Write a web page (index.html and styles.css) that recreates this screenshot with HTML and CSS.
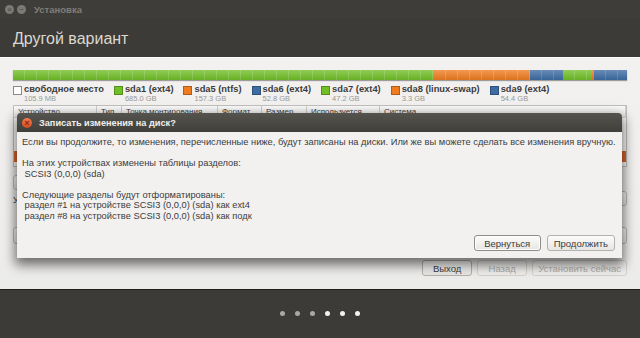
FILE: index.html
```html
<!DOCTYPE html>
<html lang="ru">
<head>
    <meta charset="UTF-8">
    <title>Установка</title>
    <link rel="stylesheet" href="styles.css">
</head>
<body>
    <div class="window">
        <div class="titlebar">
            <span class="wbtn wclose">&times;</span>
            <span class="wbtn wmin">&minus;</span>
            <span class="wtitle">Установка</span>
        </div>
        <div class="header">
            <h1>Другой вариант</h1>
        </div>

        <div class="content">
            <!-- Полоса разделов -->
            <div class="bar">
                <div class="seg green" style="flex: 685"></div>
                <div class="seg orange" style="flex: 157.3"></div>
                <div class="seg blue" style="flex: 52.8"></div>
                <div class="seg green" style="flex: 47.2"></div>
                <div class="seg orange" style="flex: 3.3"></div>
                <div class="seg blue" style="flex: 54.4"></div>
            </div>

            <div class="legend">
                <div class="item"><span class="sq free"></span><div><div class="name">свободное место</div><div class="size">105.9 MB</div></div></div>
                <div class="item"><span class="sq green"></span><div><div class="name">sda1 (ext4)</div><div class="size">685.0 GB</div></div></div>
                <div class="item"><span class="sq orange"></span><div><div class="name">sda5 (ntfs)</div><div class="size">157.3 GB</div></div></div>
                <div class="item"><span class="sq blue"></span><div><div class="name">sda6 (ext4)</div><div class="size">52.8 GB</div></div></div>
                <div class="item"><span class="sq green"></span><div><div class="name">sda7 (ext4)</div><div class="size">47.2 GB</div></div></div>
                <div class="item"><span class="sq orange"></span><div><div class="name">sda8 (linux-swap)</div><div class="size">3.3 GB</div></div></div>
                <div class="item"><span class="sq blue"></span><div><div class="name">sda9 (ext4)</div><div class="size">54.4 GB</div></div></div>
            </div>

            <!-- Таблица разделов (почти вся под диалогом) -->
            <div class="table">
                <div class="thead">
                    <span>Устройство</span><span>Тип</span><span>Точка монтирования</span><span>Формат</span><span>Размер</span><span>Используется</span><span>Система</span>
                </div>
                <div class="trow"></div>
                <div class="trow"></div>
                <div class="trow"></div>
                <div class="trow selected"></div>
                <div class="trow"></div>
            </div>

            <div class="tools">
                <span class="tbtn wide"></span><span class="tbtn"></span>
            </div>
            <div class="bootrow">
                <span class="bootlabel">У</span>
                <span class="tbtn wide"></span>
            </div>
            <div class="combo"></div>

            <div class="actions">
                <button class="btn">Выход</button>
                <button class="btn" disabled>Назад</button>
                <button class="btn" disabled>Установить сейчас</button>
            </div>
        </div>

        <div class="footer">
            <span class="dot done"></span><span class="dot done"></span><span class="dot done"></span><span class="dot"></span><span class="dot"></span><span class="dot"></span>
        </div>

        <!-- Диалог подтверждения -->
        <div class="dialog">
            <div class="dtitle">
                <span class="dclose">&times;</span>
                <span>Записать изменения на диск?</span>
            </div>
            <div class="dbody">
                <div class="msg">Если вы продолжите, то изменения, перечисленные ниже, будут записаны на диски. Или же вы можете сделать все изменения вручную.

На этих устройствах изменены таблицы разделов:
 SCSI3 (0,0,0) (sda)

Следующие разделы будут отформатированы:
 раздел #1 на устройстве SCSI3 (0,0,0) (sda) как ext4
 раздел #8 на устройстве SCSI3 (0,0,0) (sda) как подк</div>
                <div class="dbuttons">
                    <button class="btn focus">Вернуться</button>
                    <button class="btn">Продолжить</button>
                </div>
            </div>
        </div>
    </div>
</body>
</html>
```

FILE: styles.css
```css
body {
    margin: 0;
    font-family: 'Liberation Sans', Arial, sans-serif;
    color: #3c3c3c;
    background-color: #3c3b37;
}
.window {
    position: relative;
    width: 640px;
    height: 338px;
    overflow: hidden;
    display: flex;
    flex-direction: column;
}
.titlebar {
    height: 18px;
    display: flex;
    align-items: center;
    padding-left: 5px;
    background-color: #3e3d39;
}
.wbtn {
    width: 9px;
    height: 9px;
    border-radius: 50%;
    background-color: #7b7a75;
    color: #4a4945;
    font-size: 8px;
    line-height: 9px;
    text-align: center;
    margin-right: 3px;
}
.wtitle {
    margin-left: 5px;
    font-size: 9.5px;
    font-weight: bold;
    color: #807e78;
}
.header {
    height: 40px;
    padding: 11px 13px 0;
    box-sizing: border-box;
    background-color: #3c3b37;
    border-bottom: 1px solid #fbfbfa;
}
h1 {
    margin: 0;
    font-size: 16px;
    line-height: 20px;
    font-weight: normal;
    color: #dcd8cf;
}
.content {
    height: 232px;
    box-sizing: border-box;
    padding: 12px 13px 0;
    background: linear-gradient(#f2f1f0, #eeedeb 85%, #ebebea);
    border-bottom: 1px solid #1e1e1c;
}
.bar {
    display: flex;
    height: 10px;
    box-shadow: 0 1px 1px rgba(0, 0, 0, 0.35);
}
.seg.green { background-color: #70bf27; }
.seg.orange { background-color: #ee7c1f; }
.seg.blue { background-color: #3d6ca3; }
.bar .seg {
    background-image: repeating-linear-gradient(90deg, transparent 0 11px, rgba(255, 255, 255, 0.15) 11px 12px),
                      linear-gradient(rgba(255, 255, 255, 0.22), rgba(0, 0, 0, 0.08));
}
.legend {
    display: flex;
    gap: 10px;
    height: 19px;
    margin-top: 4px;
    margin-bottom: 2px;
}
.item {
    display: flex;
    gap: 2px;
}
.sq {
    width: 7px;
    height: 7px;
    margin-top: 2px;
    border: 1px solid rgba(0, 0, 0, 0.25);
}
.sq.free { background-color: #fff; border-color: #8a8985; }
.sq.green { background-color: #70bf27; }
.sq.orange { background-color: #ee7c1f; }
.sq.blue { background-color: #3d6ca3; }
.name {
    font-size: 9.3px;
    line-height: 11px;
    font-weight: bold;
    color: #3c3c3c;
}
.size {
    font-size: 7.5px;
    line-height: 8px;
    color: #9a9893;
}
.table {
    height: 62px;
    overflow: hidden;
    background-color: #fff;
    border: 1px solid #c1bfba;
    box-sizing: border-box;
    font-size: 8px;
}
.thead {
    display: grid;
    grid-template-columns: 83px 25px 96px 44px 45px 73px 1fr;
    height: 11px;
    line-height: 12px;
    background: linear-gradient(#fafafa, #ecebe9);
    border-bottom: 1px solid #d6d4d0;
}
.thead span {
    padding-left: 4px;
    border-right: 1px solid #d0cec9;
    overflow: hidden;
    white-space: nowrap;
}
.trow {
    height: 11px;
}
.trow.selected {
    background-color: #e0662d;
}
.tools {
    display: flex;
    margin-top: 8px;
    height: 14px;
}
.tbtn {
    display: block;
    width: 16px;
    height: 15px;
    box-sizing: border-box;
    border: 1px solid #bbb9b4;
    border-radius: 3px;
    background: linear-gradient(#fbfbfb, #e9e8e6);
}
.tbtn.wide {
    width: 60px;
}
.bootrow {
    display: flex;
    justify-content: space-between;
    align-items: center;
    height: 16px;
    margin-top: 1px;
    font-size: 9px;
}
.bootlabel {
    margin-top: 3px;
}
.combo {
    height: 17px;
    margin-top: 21px;
    box-sizing: border-box;
    border: 1px solid #bbb9b4;
    border-radius: 3px;
    background: linear-gradient(#fbfbfb, #e9e8e6);
}
.actions {
    display: flex;
    justify-content: flex-end;
    gap: 5px;
    margin-top: 16px;
}
.btn {
    font-family: inherit;
    font-size: 9.5px;
    height: 16px;
    min-width: 50px;
    padding: 0 5px;
    border: 1px solid #b3b1ac;
    border-radius: 3px;
    background: linear-gradient(#fcfcfb, #e6e5e2);
    color: #3c3c3c;
}
.btn:disabled {
    color: #aeaca7;
    border-color: #d3d1cd;
    background: #efeeec;
}
.footer {
    flex: 1;
    display: flex;
    justify-content: center;
    align-items: center;
    gap: 10px;
    padding-bottom: 1px;
    background-color: #3c3b37;
}
.dot {
    width: 5px;
    height: 5px;
    border-radius: 50%;
    background-color: #f2f2f0;
}
.dot.done {
    background-color: #a9a8a4;
}
.dialog {
    position: absolute;
    left: 17px;
    top: 113px;
    width: 605px;
    height: 145px;
    display: flex;
    flex-direction: column;
    border-radius: 4px 4px 0 0;
    background-color: #f2f1f0;
    box-shadow: 0 5px 12px 2px rgba(0, 0, 0, 0.55);
}
.dtitle {
    height: 19px;
    display: flex;
    align-items: center;
    padding-left: 5px;
    border-radius: 4px 4px 0 0;
    background: linear-gradient(#55534e, #403f3a);
    color: #f0efec;
    font-size: 9.2px;
    font-weight: bold;
}
.dclose {
    width: 10px;
    height: 10px;
    margin-right: 7px;
    border-radius: 50%;
    background: linear-gradient(#f47a4e, #d84a1e);
    color: #8a2a10;
    font-size: 9px;
    line-height: 10px;
    text-align: center;
    font-weight: bold;
}
.dbody {
    flex: 1;
    display: flex;
    flex-direction: column;
    padding: 5px 7px 7px 5px;
}
.msg {
    white-space: pre;
    font-size: 9.3px;
    line-height: 10.5px;
    color: #3c3c3c;
}
.dbuttons {
    margin-top: auto;
    display: flex;
    justify-content: flex-end;
    gap: 6px;
}
.dbuttons .btn {
    min-width: 67px;
    padding: 0 6px;
}
.btn.focus {
    border-color: #8f8d88;
    box-shadow: inset 0 0 0 1px #fdfdfd;
}
```
